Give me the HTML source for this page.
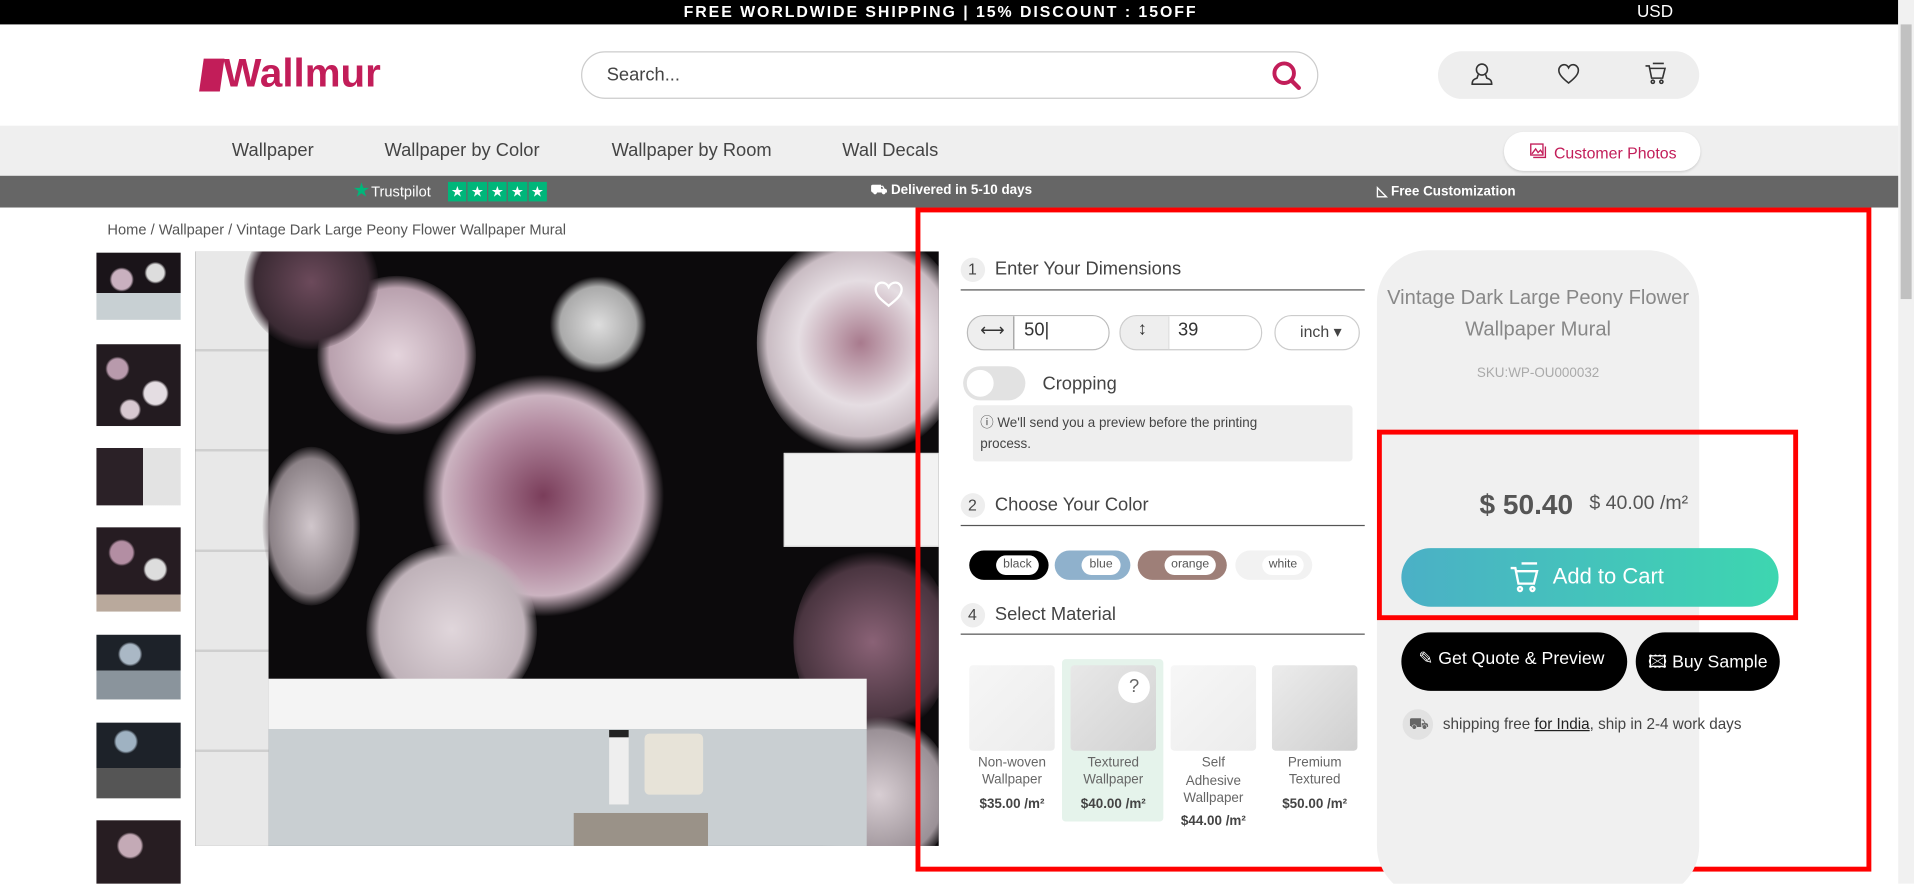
<!DOCTYPE html>
<html><head><meta charset="utf-8"><style>
html,body{margin:0;padding:0;width:1914px;height:884px;overflow:hidden;background:#fff;font-family:"Liberation Sans",sans-serif}
#w{position:absolute;left:0;top:0;width:1568px;height:724px;overflow:hidden;transform:scale(1.2207);transform-origin:0 0}
.a{position:absolute}
.t{position:absolute;white-space:nowrap}
.flw{position:absolute;border-radius:50%}
</style></head><body><div id="w">
<div class="a" style="left:0;top:0;width:1555px;height:20px;background:#000"></div>
<div class="t" style="left:560px;top:2px;color:#fff;font-weight:bold;font-size:13px;letter-spacing:1.6px">FREE WORLDWIDE SHIPPING | 15% DISCOUNT : 15OFF</div>
<div class="t" style="left:1341px;top:1px;color:#fff;font-size:14px">USD</div>
<div class="a" style="left:1555px;top:0;width:13px;height:724px;background:#f1f1f1"></div>
<div class="a" style="left:1557px;top:20px;width:9px;height:225px;background:#c1c1c1"></div>
<div class="a" style="left:165px;top:48px;width:17px;height:27px;background:#c21d59;transform:skewX(-8deg)"></div>
<div class="t" style="left:183px;top:41px;color:#c21d59;font-weight:bold;font-size:33px;letter-spacing:0px">Wallmur</div>
<div class="a" style="left:476px;top:42px;width:602px;height:37px;border:1.5px solid #ccc;border-radius:20px"></div>
<div class="t" style="left:497px;top:53px;color:#444;font-size:15px">Search...</div>
<svg class="a" style="left:1040px;top:48px" width="28" height="28" viewBox="0 0 28 28"><circle cx="12" cy="12" r="8" fill="none" stroke="#c21d59" stroke-width="3.2"/><path d="M18 18l6 6" stroke="#c21d59" stroke-width="3.5" stroke-linecap="round"/></svg>
<div class="a" style="left:1178px;top:42px;width:214px;height:39px;background:#eee;border-radius:20px"></div>
<svg class="a" style="left:1203px;top:50px" width="22" height="22" viewBox="0 0 22 22" fill="none" stroke="#333" stroke-width="1.3"><circle cx="11" cy="7" r="4.5"/><path d="M8 11l-1 3c-3 1-4 2-4 5h16c0-3-1-4-4-5l-1-3"/></svg>
<svg class="a" style="left:1274px;top:50px" width="22" height="22" viewBox="0 0 22 22" fill="none" stroke="#333" stroke-width="1.3"><path d="M11 18C6 14 3 11 3 7.5 3 5 5 3 7.3 3 9 3 10.3 4 11 5.5 11.7 4 13 3 14.7 3 17 3 19 5 19 7.5 19 11 16 14 11 18z"/></svg>
<svg class="a" style="left:1345px;top:49px" width="22" height="22" viewBox="0 0 22 22" fill="none" stroke="#333" stroke-width="1.3"><path d="M3 5h3l2 10h9l2-8H7"/><path d="M9 3h9"/><circle cx="9" cy="18" r="1.3"/><circle cx="16" cy="18" r="1.3"/></svg>
<div class="a" style="left:0;top:103px;width:1555px;height:41px;background:#efefef"></div>
<div class="t" style="left:190px;top:115px;color:#444;font-size:15px">Wallpaper</div>
<div class="t" style="left:315px;top:115px;color:#444;font-size:15px">Wallpaper by Color</div>
<div class="t" style="left:501px;top:115px;color:#444;font-size:15px">Wallpaper by Room</div>
<div class="t" style="left:690px;top:115px;color:#444;font-size:15px">Wall Decals</div>
<div class="a" style="left:1232px;top:108px;width:161px;height:32px;background:#fff;border-radius:16px;box-shadow:0 1px 2px rgba(0,0,0,.15)"></div>
<svg class="a" style="left:1253px;top:117px" width="14" height="13" viewBox="0 0 14 13" fill="none" stroke="#c21d59" stroke-width="1.1"><rect x="1" y="1" width="10" height="9"/><path d="M3 12h10V3"/><path d="M2 9l3-4 2 3 2-2 2 3"/></svg>
<div class="t" style="left:1273px;top:118px;color:#c21d59;font-size:13px">Customer Photos</div>
<div class="a" style="left:0;top:144px;width:1555px;height:26px;background:#666"></div>
<div class="t" style="left:289px;top:146px;color:#00b67a;font-size:16px">★</div>
<div class="t" style="left:304px;top:150px;color:#fff;font-size:12px">Trustpilot</div>
<div class="a" style="left:367px;top:149px;width:81px;height:16px;display:flex;gap:1px">
<span style="flex:1;background:#00b67a;color:#fff;font-size:12px;text-align:center;line-height:16px">★</span><span style="flex:1;background:#00b67a;color:#fff;font-size:12px;text-align:center;line-height:16px">★</span><span style="flex:1;background:#00b67a;color:#fff;font-size:12px;text-align:center;line-height:16px">★</span><span style="flex:1;background:#00b67a;color:#fff;font-size:12px;text-align:center;line-height:16px">★</span><span style="flex:1;background:#00b67a;color:#fff;font-size:12px;text-align:center;line-height:16px">★</span></div>
<div class="t" style="left:713px;top:150px;color:#fff;font-size:11px;font-weight:bold">⛟ Delivered in 5-10 days</div>
<div class="t" style="left:1128px;top:150px;color:#fff;font-size:11px;font-weight:bold">◺ Free Customization</div>
<div class="t" style="left:88px;top:181px;color:#555;font-size:12px">Home / Wallpaper / Vintage Dark Large Peony Flower Wallpaper Mural</div>
<div class="a" style="left:79px;top:207px;width:69px;height:55px;background:radial-gradient(circle at 30% 40%,#c9b0bf 0 8px,transparent 10px),radial-gradient(circle at 70% 30%,#ddd 0 7px,transparent 9px),linear-gradient(#1a1419 0 60%,#c8d0d3 60%)"></div>
<div class="a" style="left:79px;top:282px;width:69px;height:67px;background:radial-gradient(circle at 25% 30%,#b89aac 0 8px,transparent 10px),radial-gradient(circle at 70% 60%,#e4dde2 0 9px,transparent 11px),radial-gradient(circle at 40% 80%,#d7c8d0 0 7px,transparent 9px),#231b20"></div>
<div class="a" style="left:79px;top:367px;width:69px;height:47px;background:linear-gradient(90deg,#2b2127 0 55%,#e3e3e3 55%)"></div>
<div class="a" style="left:79px;top:432px;width:69px;height:69px;background:radial-gradient(circle at 30% 30%,#b38ea3 0 9px,transparent 11px),radial-gradient(circle at 70% 50%,#ddd 0 8px,transparent 10px),linear-gradient(#261c22 0 80%,#b9a99c 80%)"></div>
<div class="a" style="left:79px;top:520px;width:69px;height:53px;background:radial-gradient(circle at 40% 30%,#aab8c5 0 8px,transparent 10px),linear-gradient(#1d2229 0 55%,#8a949c 55%)"></div>
<div class="a" style="left:79px;top:592px;width:69px;height:62px;background:radial-gradient(circle at 35% 25%,#9fb2c2 0 8px,transparent 10px),linear-gradient(#1d2229 0 60%,#555 60%)"></div>
<div class="a" style="left:79px;top:672px;width:69px;height:52px;background:radial-gradient(circle at 40% 40%,#c4aab6 0 9px,transparent 11px),#271d22"></div>
<div class="a" style="left:160px;top:206px;width:609px;height:487px;overflow:hidden;background:#0c0a0c">
<div class="a" style="left:0;top:0;width:60px;height:487px;background:repeating-linear-gradient(#e8e8e8 0 80px,#cfcfcf 80px 82px)"></div>
<div class="flw" style="left:100px;top:20px;width:130px;height:130px;background:radial-gradient(circle,#e4d4dc,#b9a1ae 60%,transparent 72%)"></div>
<div class="flw" style="left:185px;top:100px;width:200px;height:200px;background:radial-gradient(circle,#7a3d5a,#b38aa0 40%,#cbb3c0 58%,transparent 70%)"></div>
<div class="flw" style="left:40px;top:-30px;width:110px;height:110px;background:radial-gradient(circle,#6c4a5b,#3a2a33 60%,transparent 72%)"></div>
<div class="flw" style="left:460px;top:-20px;width:170px;height:190px;background:radial-gradient(circle,#a87a8d,#e5dde2 40%,#c9bcc3 60%,transparent 72%)"></div>
<div class="flw" style="left:140px;top:240px;width:140px;height:140px;background:radial-gradient(circle,#e0d6db,#bfb2b9 60%,transparent 72%)"></div>
<div class="flw" style="left:55px;top:160px;width:80px;height:130px;background:radial-gradient(ellipse,#d0c6cb,#8c8287 60%,transparent 72%)"></div>
<div class="flw" style="left:290px;top:20px;width:80px;height:80px;background:radial-gradient(circle,#ddd,#aaa 55%,transparent 70%)"></div>
<div class="flw" style="left:490px;top:240px;width:130px;height:160px;background:radial-gradient(circle,#8a6276,#4a3540 60%,transparent 72%)"></div>
<div class="flw" style="left:500px;top:380px;width:120px;height:130px;background:radial-gradient(circle,#d8ced3,#9a9096 60%,transparent 72%)"></div>
<div class="a" style="left:482px;top:165px;width:127px;height:75px;background:#f2f2f2;border:1px solid #ddd"></div>
<div class="a" style="left:60px;top:350px;width:490px;height:137px;background:linear-gradient(#f4f4f4 0 30%,#c9cfd2 30%)"></div>
<div class="a" style="left:339px;top:392px;width:16px;height:55px;background:#eee;border-top:6px solid #222"></div>
<div class="a" style="left:368px;top:395px;width:48px;height:50px;background:#e7e3d8;border-radius:4px"></div>
<div class="a" style="left:310px;top:460px;width:110px;height:27px;background:#9a9288"></div>
<svg class="a" style="left:555px;top:23px" width="26" height="24" viewBox="0 0 22 20" fill="none" stroke="#fff" stroke-width="1.6"><path d="M11 18C6 14 2 11 2 6.5 2 4 4 2 6.3 2 8 2 10 3 11 5 12 3 14 2 15.7 2 18 2 20 4 20 6.5 20 11 16 14 11 18z"/></svg>
</div>
<div class="a" style="left:750px;top:170px;width:775px;height:536px;border:4px solid #f00"></div>
<div class="a" style="left:787px;top:211px;width:20px;height:20px;border-radius:50%;background:#eee"></div>
<div class="t" style="left:793px;top:213px;color:#444;font-size:13px">1</div>
<div class="t" style="left:815px;top:212px;color:#444;font-size:15px">Enter Your Dimensions</div>
<div class="a" style="left:787px;top:237px;width:331px;height:1px;background:#555"></div>
<div class="a" style="left:792px;top:258px;width:115px;height:27px;border:1px solid #bbb;border-radius:14px;background:#eee;overflow:hidden"><div class="a" style="left:37px;top:0;width:80px;height:27px;background:#fff;border-left:1px solid #999"></div></div>
<div class="t" style="left:803px;top:262px;font-size:14px;color:#333">⟷</div>
<div class="t" style="left:839px;top:262px;font-size:15px;color:#333">50|</div>
<div class="a" style="left:917px;top:258px;width:115px;height:27px;border:1px solid #ccc;border-radius:14px;background:#eee;overflow:hidden"><div class="a" style="left:39px;top:0;width:80px;height:27px;background:#fff;border-left:1px solid #ddd"></div></div>
<div class="t" style="left:932px;top:261px;font-size:15px;color:#333">↕</div>
<div class="t" style="left:965px;top:262px;font-size:15px;color:#333">39</div>
<div class="a" style="left:1044px;top:258px;width:68px;height:27px;border:1px solid #ccc;border-radius:14px"></div>
<div class="t" style="left:1065px;top:264px;font-size:13px;color:#444">inch ▾</div>
<div class="a" style="left:789px;top:300px;width:51px;height:28px;border-radius:14px;background:#e2e2e2"></div>
<div class="a" style="left:792px;top:303px;width:22px;height:22px;border-radius:50%;background:#fff"></div>
<div class="t" style="left:854px;top:306px;font-size:15px;color:#444">Cropping</div>
<div class="a" style="left:797px;top:332px;width:311px;height:46px;background:#eee;border-radius:3px"></div>
<div class="t" style="left:803px;top:339px;font-size:11px;color:#444;line-height:17px">ⓘ We'll send you a preview before the printing<br>process.</div>
<div class="a" style="left:787px;top:404px;width:20px;height:20px;border-radius:50%;background:#eee"></div>
<div class="t" style="left:793px;top:406px;color:#444;font-size:13px">2</div>
<div class="t" style="left:815px;top:405px;color:#444;font-size:15px">Choose Your Color</div>
<div class="a" style="left:787px;top:430px;width:331px;height:1px;background:#555"></div>
<div class="a" style="left:794px;top:451px;width:65px;height:24px;border-radius:12px;background:#000"><div class="a" style="left:22px;top:4px;width:35px;height:16px;border-radius:8px;background:#fff;font-size:10px;color:#555;text-align:center;line-height:16px">black</div></div>
<div class="a" style="left:864px;top:451px;width:62px;height:24px;border-radius:12px;background:#8fb1cc"><div class="a" style="left:22px;top:4px;width:32px;height:16px;border-radius:8px;background:#fff;font-size:10px;color:#555;text-align:center;line-height:16px">blue</div></div>
<div class="a" style="left:932px;top:451px;width:73px;height:24px;border-radius:12px;background:#9e7f78"><div class="a" style="left:22px;top:4px;width:42px;height:16px;border-radius:8px;background:#fff;font-size:10px;color:#555;text-align:center;line-height:16px">orange</div></div>
<div class="a" style="left:1012px;top:451px;width:63px;height:24px;border-radius:12px;background:#f2f2f2"><div class="a" style="left:22px;top:4px;width:34px;height:16px;border-radius:8px;background:#fff;font-size:10px;color:#555;text-align:center;line-height:16px">white</div></div>
<div class="a" style="left:787px;top:494px;width:20px;height:20px;border-radius:50%;background:#eee"></div>
<div class="t" style="left:793px;top:496px;color:#444;font-size:13px">4</div>
<div class="t" style="left:815px;top:495px;color:#444;font-size:15px">Select Material</div>
<div class="a" style="left:787px;top:519px;width:331px;height:1px;background:#555"></div>
<div class="a" style="left:870px;top:540px;width:83px;height:133px;background:#e5f3eb;border-radius:3px"></div>
<div class="a" style="left:794px;top:545px;width:70px;height:70px;background:linear-gradient(135deg,#f6f6f6,#ececec);border-radius:3px"></div>
<div class="a" style="left:877px;top:545px;width:70px;height:70px;background:linear-gradient(135deg,#e8e8e8,#d2d2d2);border-radius:3px"></div>
<div class="a" style="left:916px;top:550px;width:26px;height:26px;border-radius:50%;background:#fff;font-size:15px;color:#666;text-align:center;line-height:26px">?</div>
<div class="a" style="left:959px;top:545px;width:70px;height:70px;background:linear-gradient(135deg,#f7f7f7,#ececec);border-radius:3px"></div>
<div class="a" style="left:1042px;top:545px;width:70px;height:70px;background:linear-gradient(135deg,#ececec,#cfcfcf);border-radius:3px"></div>
<div class="t" style="left:794px;top:618px;width:70px;text-align:center;font-size:11px;color:#666;line-height:14px;white-space:normal">Non-woven Wallpaper<br><b style="color:#444;line-height:26px">$35.00 /m²</b></div>
<div class="t" style="left:877px;top:618px;width:70px;text-align:center;font-size:11px;color:#666;line-height:14px;white-space:normal">Textured Wallpaper<br><b style="color:#444;line-height:26px">$40.00 /m²</b></div>
<div class="t" style="left:959px;top:618px;width:70px;text-align:center;font-size:11px;color:#666;line-height:14.5px;white-space:normal">Self<br>Adhesive Wallpaper<br><b style="color:#444;line-height:22px">$44.00 /m²</b></div>
<div class="t" style="left:1042px;top:618px;width:70px;text-align:center;font-size:11px;color:#666;line-height:14px;white-space:normal">Premium Textured<br><b style="color:#444;line-height:26px">$50.00 /m²</b></div>
<div class="a" style="left:1128px;top:205px;width:264px;height:530px;background:#f0f0f0;border-radius:42px"></div>
<div class="t" style="left:1128px;top:231px;width:264px;text-align:center;font-size:16.5px;color:#888;line-height:26px;white-space:normal">Vintage Dark Large Peony Flower Wallpaper Mural</div>
<div class="t" style="left:1128px;top:300px;width:264px;text-align:center;font-size:11px;color:#aaa">SKU:WP-OU000032</div>
<div class="a" style="left:1128px;top:352px;width:337px;height:148px;border:4px solid #f00"></div>
<div class="t" style="left:1212px;top:400px;font-size:23px;color:#555;font-weight:bold">$ 50.40</div>
<div class="t" style="left:1302px;top:404px;font-size:16px;color:#555">$ 40.00 /m²</div>
<div class="a" style="left:1148px;top:449px;width:309px;height:48px;border-radius:24px;background:linear-gradient(90deg,#4bb0c6,#3dd6b0)"></div>
<svg class="a" style="left:1235px;top:459px" width="28" height="28" viewBox="0 0 22 22" fill="none" stroke="#fff" stroke-width="1.5"><path d="M2 5h3l2 10h10l2-8H6"/><path d="M9 2h10"/><circle cx="8" cy="18.5" r="1.3"/><circle cx="16" cy="18.5" r="1.3"/></svg>
<div class="t" style="left:1272px;top:462px;font-size:18px;color:#fff">Add to Cart</div>
<div class="a" style="left:1148px;top:518px;width:185px;height:48px;border-radius:24px;background:#000"></div>
<div class="t" style="left:1162px;top:532px;font-size:14.5px;color:#fff">✎ Get Quote &amp; Preview</div>
<div class="a" style="left:1340px;top:518px;width:118px;height:48px;border-radius:24px;background:#000"></div>
<div class="t" style="left:1350px;top:532px;font-size:14.5px;color:#fff">🖾 Buy Sample</div>
<div class="a" style="left:1149px;top:581px;width:25px;height:25px;border-radius:50%;background:#e2e2e2"></div>
<div class="t" style="left:1154px;top:585px;font-size:13px;color:#666">⛟</div>
<div class="t" style="left:1182px;top:586px;font-size:12.5px;color:#444">shipping free <u style="color:#222">for India</u>, ship in 2-4 work days</div>
</div></body></html>
